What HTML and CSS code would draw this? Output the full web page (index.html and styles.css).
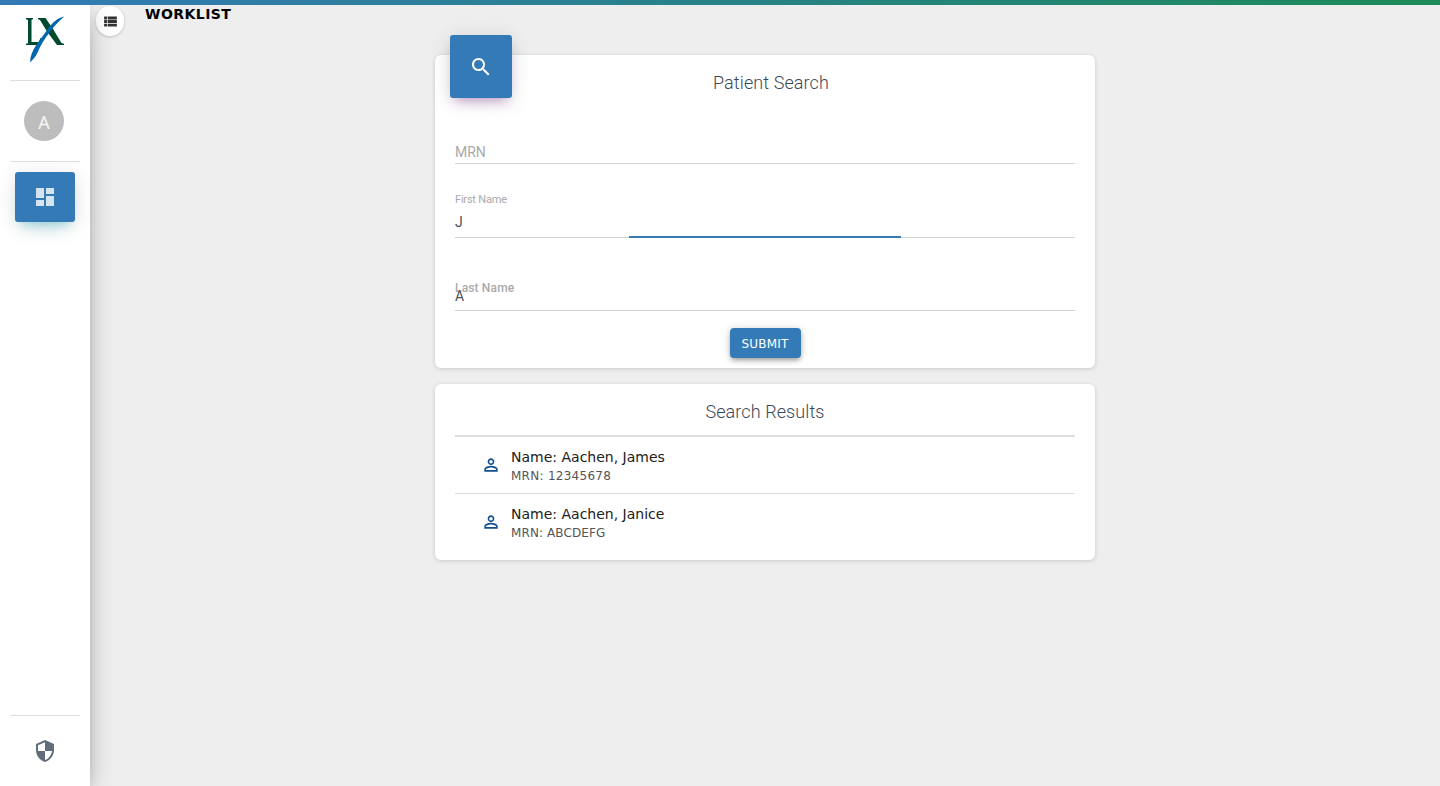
FILE: index.html
```
<!DOCTYPE html>
<html lang="en">
<head>
<meta charset="utf-8">
<title>Worklist</title>
<link rel="stylesheet" href="styles.css">
</head>
<body>
<div class="topbar"></div>
<div class="app">
  <aside class="sidebar">
    <div class="brand">
      <svg class="logo" width="40" height="48" viewBox="0 0 40 48" role="img" aria-label="LX">
        <path fill="#004b2d" d="M1 2h7v1.200l-1.500.500V26h7.500l1.500-4h1.500l-1 7H1v-1.200l2-.600V4L1 3.200zM13 2h7.500l7.500 11 8.500 14 2.500.800V29h-7L22 15.500 15 4l-2-.800z"/>
        <path fill="#0067ac" d="M39.500.500C32 2 27 7 22 14 15 25 5.500 33 5 46.500c3-3 6-6 8.500-12 4-9 8-14 12.500-20C31 8 35 4 39.500.500z"/>
      </svg>
    </div>
    <div class="profile"><span class="avatar">A</span></div>
    <nav class="nav">
      <a class="nav-tile"><svg width="24" height="24" viewBox="0 0 24 24"><path d="M3 13h8V3H3v10zm0 8h8v-6H3v6zm10 0h8V11h-8v10zm0-18v6h8V3h-8z"/></svg></a>
    </nav>
    <div class="sidebar-foot">
      <svg width="24" height="24" viewBox="0 0 24 24"><path d="M12 1L3 5v6c0 5.550 3.840 10.740 9 12 5.160-1.260 9-6.450 9-12V5l-9-4zm0 10.990h7c-.530 4.120-3.280 7.790-7 8.940V12H5V6.300l7-3.110v8.800z"/></svg>
    </div>
  </aside>
  <main class="main">
    <header class="header">
      <button class="toggle"><svg width="17" height="17" viewBox="0 0 24 24"><path d="M3 9h4V5H3v4zm0 5h4v-4H3v4zm5 0h13v-4H8v4zm0-9v4h13V5H8zM3 19h4v-4H3v4zm5 0h13v-4H8v4z"/></svg></button>
      <h1 class="page-title">WORKLIST</h1>
    </header>
    <section class="card search-card">
      <div class="card-head">
        <div class="card-icon"><svg width="24" height="24" viewBox="0 0 24 24"><path d="M15.500 14h-.790l-.280-.270C15.410 12.590 16 11.110 16 9.500 16 5.910 13.090 3 9.500 3S3 5.910 3 9.500 5.910 16 9.500 16c1.610 0 3.090-.590 4.230-1.570l.270.280v.790l5 4.990L20.490 19l-4.990-5zm-6 0C7.010 14 5 11.990 5 9.500S7.010 5 9.500 5 14 7.010 14 9.500 11.990 14 9.500 14z"/></svg></div>
        <h2 class="card-title">Patient Search</h2>
      </div>
      <div class="field field-mrn"><label class="label">MRN</label></div>
      <div class="field field-first"><label class="label label-small">First Name</label><span class="value">J</span></div>
      <div class="field field-last"><label class="label label-mid">Last Name</label><span class="value">A</span></div>
      <div class="actions"><button class="submit">SUBMIT</button></div>
    </section>
    <section class="card results-card">
      <h2 class="card-title">Search Results</h2>
      <ul class="results">
        <li class="result">
          <svg class="person" width="20" height="20" viewBox="0 0 24 24"><path d="M12 5.900c1.160 0 2.100.940 2.100 2.100s-.940 2.100-2.100 2.100S9.900 9.160 9.900 8s.940-2.100 2.100-2.100m0 9c2.970 0 6.100 1.460 6.100 2.100v1.100H5.900V17c0-.640 3.130-2.100 6.100-2.100M12 4C9.790 4 8 5.790 8 8s1.790 4 4 4 4-1.790 4-4-1.790-4-4-4zm0 9c-2.670 0-8 1.340-8 4v3h16v-3c0-2.660-5.330-4-8-4z"/></svg>
          <div><div class="name">Name: Aachen, James</div><div class="mrn mrn-digits">MRN: 12345678</div></div>
        </li>
        <li class="result">
          <svg class="person" width="20" height="20" viewBox="0 0 24 24"><path d="M12 5.900c1.160 0 2.100.940 2.100 2.100s-.940 2.100-2.100 2.100S9.900 9.160 9.900 8s.940-2.100 2.100-2.100m0 9c2.970 0 6.100 1.460 6.100 2.100v1.100H5.900V17c0-.640 3.130-2.100 6.100-2.100M12 4C9.790 4 8 5.790 8 8s1.790 4 4 4 4-1.790 4-4-1.790-4-4-4zm0 9c-2.670 0-8 1.340-8 4v3h16v-3c0-2.660-5.330-4-8-4z"/></svg>
          <div><div class="name">Name: Aachen, Janice</div><div class="mrn">MRN: ABCDEFG</div></div>
        </li>
      </ul>
    </section>
  </main>
</div>
</body>
</html>
```
FILE: styles.css
```
* { box-sizing: border-box; }
body { margin: 0; height: 786px; display: flex; flex-direction: column; overflow: hidden; background: #eee; font-family: Verdana, "DejaVu Sans", sans-serif; }
h1, h2, ul { margin: 0; padding: 0; }
button { border: 0; padding: 0; font-family: inherit; }
svg { display: block; fill: currentColor; }
.topbar { height: 5px; flex: none; background: linear-gradient(90deg, #337ab7, #1d8a58); position: relative; z-index: 3; }
.app { flex: 1; display: flex; }
.sidebar { width: 90px; flex: none; padding: 0 10px; background: #fff; display: flex; flex-direction: column; position: relative; z-index: 2; box-shadow: 0 10px 30px -12px rgba(0,0,0,.42), 0 4px 25px 0 rgba(0,0,0,.12), 0 8px 10px -5px rgba(0,0,0,.2); }
.brand { height: 76px; padding: 11px 0 0 15px; border-bottom: 1px solid #dedede; }
.profile { height: 81px; display: flex; justify-content: center; align-items: center; padding-right: 2px; border-bottom: 1px solid #dedede; }
.avatar { width: 40px; height: 40px; border-radius: 50%; background: #bdbdbd; color: #f5f5f5; font: 18px/42px "Noto Sans", sans-serif; text-align: center; }
.nav { padding: 10px 5px; }
.nav-tile { height: 50px; border-radius: 3px; background: #337ab7; color: #d6e4f0; display: flex; align-items: center; justify-content: center; box-shadow: 0 12px 20px -10px rgba(0,172,193,.28), 0 4px 20px 0 rgba(0,0,0,.12), 0 7px 8px -5px rgba(0,172,193,.2); }
.sidebar-foot { margin-top: auto; height: 71px; border-top: 1px solid #dedede; display: flex; justify-content: center; align-items: center; color: #626d7b; }
.main { flex: 1; display: flex; flex-direction: column; align-items: center; }
.header { width: 100%; height: 50px; display: flex; align-items: flex-start; padding-left: 6px; gap: 21px; }
.toggle { width: 28px; height: 30px; margin-top: 1px; border-radius: 15px; background: #fff; color: #333; display: flex; align-items: center; justify-content: center; box-shadow: 0 1px 3px rgba(0,0,0,.2); }
.page-title { font: bold 14px/18px "DejaVu Sans", sans-serif; letter-spacing: .45px; color: #000; }
.card { width: 660px; padding: 0 20px; border-radius: 6px; background: #fff; box-shadow: 0 1px 4px 0 rgba(0,0,0,.16); }
.search-card { height: 313px; display: flex; flex-direction: column; }
.card-head { height: 64px; flex: none; display: flex; margin-left: -5px; }
.card-icon { width: 62px; height: 63px; flex: none; margin-top: -20px; border-radius: 3px; background: #337ab7; color: #fff; display: flex; align-items: center; justify-content: center; box-shadow: 0 4px 20px 0 rgba(0,0,0,.14), 0 7px 10px -5px rgba(156,39,176,.4); }
.card-title { font: 300 18px/27px Roboto, sans-serif; letter-spacing: .1px; color: #3c4858; text-align: center; }
.card-head .card-title { width: 518px; padding-top: 14px; }
.field { flex: none; border-bottom: 1px solid #d2d2d2; font: 14px/20px Roboto, sans-serif; color: #495057; display: flex; flex-direction: column; position: relative; }
.label { color: #aaa; }
.field-mrn { height: 45px; padding-top: 23px; }
.field-first { height: 74px; padding-top: 26px; }
.field-first::after { content: ""; position: absolute; left: 174px; bottom: -1px; width: 272px; height: 2px; background: #337ab7; }
.label-small { font-size: 11px; letter-spacing: -.2px; }
.field-first .value { margin-top: 2px; }
.field-last { height: 73px; padding-top: 40px; }
.label-mid { font-size: 12px; font-weight: 500; letter-spacing: .15px; }
.field-last .value { margin-top: -12px; }
.actions { padding-top: 17px; display: flex; justify-content: center; }
.submit { width: 71px; height: 30px; padding-top: 1px; border-radius: 4px; background: #337ab7; color: #fff; font-size: 12px; letter-spacing: .2px; box-shadow: 0 3px 5px -1px rgba(0,0,0,.3), 0 1px 8px rgba(0,0,0,.18); }
.results-card { height: 176px; margin-top: 16px; padding-top: 14px; }
.results { margin-top: 10px; border-top: 2px solid #dedede; list-style: none; }
.result { height: 57px; padding: 10px 26px 0; display: flex; gap: 10px; border-bottom: 1px solid #dedede; }
.result:last-child { border-bottom: 0; }
.person { margin-top: 8px; color: #0f4f8b; }
.name { font-size: 14px; line-height: 20px; color: #212121; }
.mrn { font-size: 12px; line-height: 19px; letter-spacing: .1px; color: #555; }
.mrn-digits { letter-spacing: .27px; }
```
